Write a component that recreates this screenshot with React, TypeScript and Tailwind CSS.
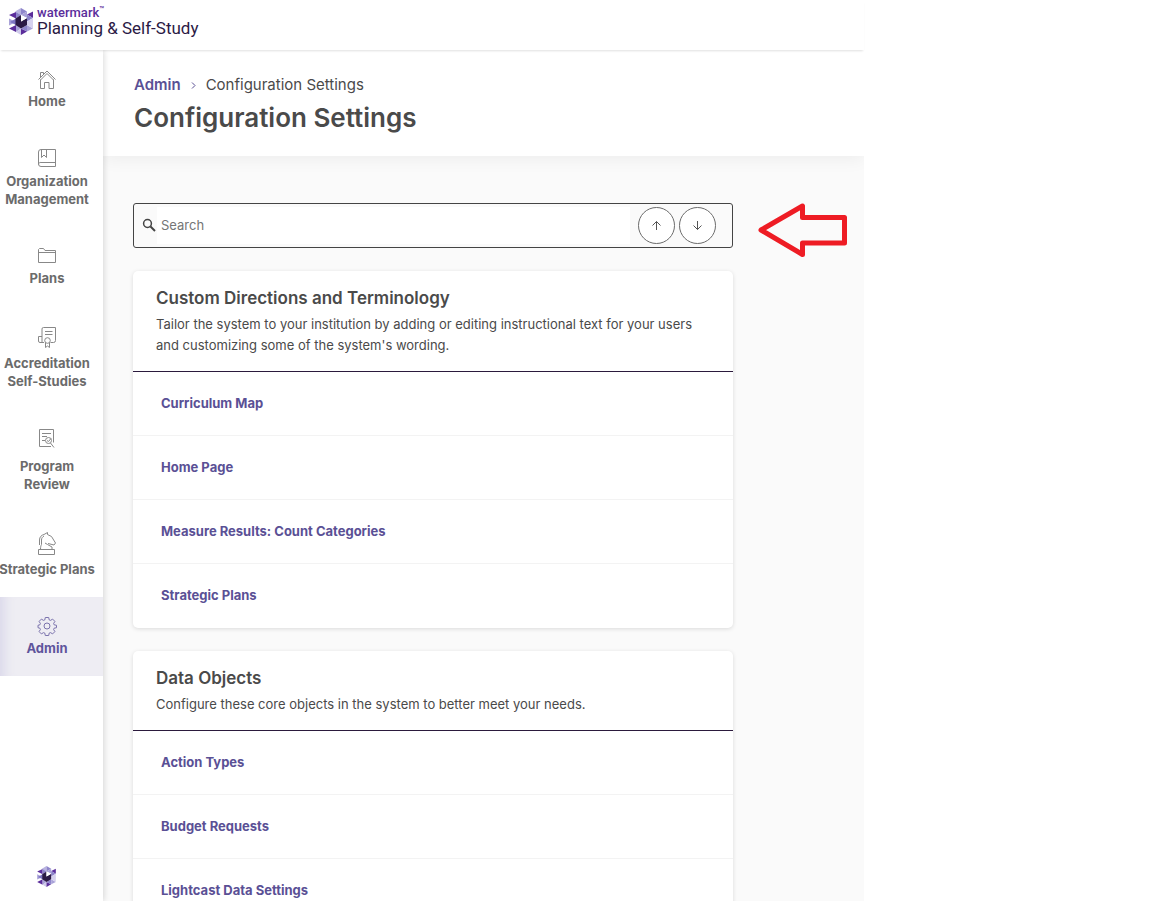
import type { ReactNode } from 'react'

type NavItem = {
  label: string[]
  icon: ReactNode
  active?: boolean
}

type Section = {
  title: string
  description: string
  links: string[]
}

function LogoMark({ className }: { className: string }) {
  return (
    <svg viewBox="0 0 24 27" className={className} aria-hidden="true">
      <path d="M12 0V7L6 3.5Z" fill="#b9b4e0" />
      <path d="M12 0 18 3.5 12 7Z" fill="#8f86cb" />
      <path d="M0 7 7 4V10.500Z" fill="#5b2d9b" />
      <path d="M7 4 12 7 7 10.500Z" fill="#8d84ca" />
      <path d="M24 3.500V10L18 6.500Z" fill="#5b2d9b" />
      <path d="M12 7 18 3.500V10Z" fill="#a9a2d8" />
      <path d="M18 6.500 24 10 18 13.500Z" fill="#8d84ca" />
      <path d="M0 10.500 7 14 0 17.500Z" fill="#a9a2d8" />
      <path d="M7 10.500V17L1 14Z" fill="#7d74c2" />
      <path d="M0 20.500 7 17V24Z" fill="#5b2d9b" />
      <path d="M7 17 12 20.500 7 24Z" fill="#a9a2d8" />
      <path d="M12 20.500V27L7 24Z" fill="#cfcaea" />
      <path d="M12 20.500 18 23.500 12 27Z" fill="#5b2d9b" />
      <path d="M12 20.500 18 17V23.500Z" fill="#8d84ca" />
      <path d="M18 17 24 20.500 18 23.500Z" fill="#a9a2d8" />
      <path d="M24 10V20.500L18 17V13.500Z" fill="#d6d1ee" />
      <path d="M6.500 10.500 12 7V13.500L18 10V17L12 20.500 6.500 17Z" fill="#2b1a45" />
      <path d="M12 7 18 10 12 13.500Z" fill="#fff" />
    </svg>
  )
}

function LineIcon({ children, height = 20 }: { children: ReactNode; height?: number }) {
  return (
    <svg
      width="20"
      height={height}
      viewBox={`0 0 20 ${height}`}
      fill="none"
      stroke="currentColor"
      strokeWidth="1"
      className="opacity-80"
      aria-hidden="true"
    >
      {children}
    </svg>
  )
}

const navItems: NavItem[] = [
  {
    label: ['Home'],
    icon: (
      <LineIcon height={19}>
        <path d="M1.5 9.5 10 1l8.500 8.500M3.500 9.500v9h4v-6h4.500v6h4.500v-9M3.500 7.500v-5h3v2M3.500 10 10 3.500l6.500 6.500" />
      </LineIcon>
    ),
  },
  {
    label: ['Organization', 'Management'],
    icon: (
      <LineIcon height={21}>
        <path d="M4 1.500h14.500v17H4A2.500 2.500 0 0 1 1.500 16V4A2.500 2.500 0 0 1 4 1.500ZM1.500 16.500A2 2 0 0 1 4 14.500h14.500M4.500 1.500v8l2.500-2.500 2.500 2.500v-8" />
      </LineIcon>
    ),
  },
  {
    label: ['Plans'],
    icon: (
      <LineIcon>
        <path d="M1.500 16.500v-13l1-1h4l1.500 2h10.500v12ZM1.500 6.500h17" />
      </LineIcon>
    ),
  },
  {
    label: ['Accreditation', 'Self-Studies'],
    icon: (
      <LineIcon height={26}>
        <path d="M13.500 17.500h3a2 2 0 0 0 2-2v-13H6.500q-1.500 0-1.500 1.500v13M7 17.500H3q-1.500 0-1.500-1.500v-4.500H5M8 6.500h7.500M8 9.500h7.500" />
        <circle cx="10.500" cy="15.500" r="2.800" />
        <path d="M8.500 17.500v5l2-1.500 2 1.500v-5" />
      </LineIcon>
    ),
  },
  {
    label: ['Program', 'Review'],
    icon: (
      <LineIcon height={26}>
        <path d="M14 18.500H2.500v-17h14v13M5 5.500h9M5 8.500h5M5 12.500h3" />
        <circle cx="11.500" cy="12.500" r="3" />
        <path d="m13.500 15 3.500 4.500M10 12.500l1.500 1 2.500-3" />
      </LineIcon>
    ),
  },
  {
    label: ['Strategic Plans'],
    icon: (
      <LineIcon height={26}>
        <path d="M1.500 18.500h16v5h-16ZM3.500 18.500c0-3 .500-4 1-5M2.500 14V9c0-3 2-5 4.500-5.500L10.500 1.500v2l4 2 4 6.500-1.500 2-6-1.500M8 12l2.500 1.500L15 16v2.500M4.500 13.500V9c0-2 1-3 2.500-4" />
      </LineIcon>
    ),
  },
  {
    label: ['Admin'],
    active: true,
    icon: (
      <LineIcon>
        <circle cx="10" cy="10" r="3" />
        <path d="M8.300 1.500h3.400l.500 2.400 1.300.500 2.100-1.300 2.300 2.300-1.300 2.100.500 1.300 2.400.500v2.400l-2.400.500-.500 1.300 1.300 2.100-2.300 2.300-2.100-1.300-1.300.500-.500 2.400H8.300l-.500-2.400-1.300-.500-2.100 1.300-2.300-2.300 1.300-2.100-.500-1.300-1.900-.500V9.300l1.900-.500.500-1.300-1.300-2.100 2.300-2.300 2.100 1.300 1.300-.500Z" />
      </LineIcon>
    ),
  },
]

const sections: Section[] = [
  {
    title: 'Custom Directions and Terminology',
    description:
      "Tailor the system to your institution by adding or editing instructional text for your users and customizing some of the system's wording.",
    links: ['Curriculum Map', 'Home Page', 'Measure Results: Count Categories', 'Strategic Plans'],
  },
  {
    title: 'Data Objects',
    description: 'Configure these core objects in the system to better meet your needs.',
    links: ['Action Types', 'Budget Requests', 'Lightcast Data Settings'],
  },
]

function TopBar() {
  return (
    <header className="relative z-20 flex h-[50px] shrink-0 items-start gap-1 bg-white pt-[5px] pl-[9px] shadow-[0_2px_2px_-1px_rgba(0,0,0,0.12)]">
      <LogoMark className="mt-[3px] h-[27px] w-6" />
      <div className="font-['Roboto',sans-serif] whitespace-nowrap">
        <p className="flex text-[13px] leading-[15px] font-medium text-[#5b2d9b]">
          watermark<span className="text-[8px] leading-[10px]">™</span>
        </p>
        <p className="text-[17px] leading-4 text-[#2b1a45]">Planning &amp; Self-Study</p>
      </div>
    </header>
  )
}

function Sidebar() {
  return (
    <nav
      aria-label="Main"
      className="relative z-10 flex w-[103px] shrink-0 flex-col bg-white pt-px text-[#6b6b6b] shadow-[1px_0_6px_rgba(0,0,0,0.15)]"
    >
      {navItems.map((item) => (
        <a
          key={item.label[0]}
          href="#"
          aria-current={item.active ? 'page' : undefined}
          className={
            item.active
              ? 'flex flex-col items-center gap-[3px] bg-[#eeedf3] py-[19px] pr-[9px] text-[#5f559c] shadow-[inset_14px_0_12px_-10px_#d9d7ea]'
              : 'flex flex-col items-center gap-[3px] py-[19px] pr-[9px]'
          }
        >
          {item.icon}
          <span className="text-center text-[13px] leading-[18px] font-bold whitespace-nowrap">
            {item.label.map((line) => (
              <span key={line} className="block">{line}</span>
            ))}
          </span>
        </a>
      ))}
      <div className="mt-auto flex justify-center pr-[11px] pb-[14px]">
        <LogoMark className="h-[21px] w-[19px]" />
      </div>
    </nav>
  )
}

function SearchBox() {
  const buttonClass =
    'flex size-[37px] items-center justify-center rounded-full border border-[#6b6b6b] bg-white text-[#555]'

  return (
    <div className="relative">
      <div className="flex h-[45px] items-center rounded-[3px] border border-[#444] pr-4">
        <label htmlFor="search" aria-label="Search" className="pl-2">
          <svg width="15" height="15" viewBox="0 0 15 15" fill="none" stroke="#444" strokeWidth="1.5" aria-hidden="true">
            <circle cx="5.500" cy="5.500" r="3.900" />
            <path d="m8.500 8.500 4.500 4.500" strokeWidth="2" />
          </svg>
        </label>
        <input
          id="search"
          type="text"
          placeholder="Search"
          className="h-[37px] min-w-0 flex-1 bg-white pb-px pl-1 text-[13px] text-[#444] outline-none placeholder:text-[#757575]"
        />
        <div className="flex gap-1 pl-2">
          <button type="button" aria-label="Previous result" className={buttonClass}>
            <svg width="11" height="11" viewBox="0 0 11 11" fill="none" stroke="currentColor" aria-hidden="true">
              <path d="M5.500 10V1.500M1.500 5.500l4-4 4 4" />
            </svg>
          </button>
          <button type="button" aria-label="Next result" className={buttonClass}>
            <svg width="11" height="11" viewBox="0 0 11 11" fill="none" stroke="currentColor" aria-hidden="true">
              <path d="M5.500 1v8.500M1.500 5.500l4 4 4-4" />
            </svg>
          </button>
        </div>
      </div>
      {/* callout arrow pointing at the search buttons */}
      <svg
        className="absolute top-0 left-full ml-6"
        width="92"
        height="56"
        viewBox="0 0 92 56"
        fill="none"
        stroke="#ee1c24"
        strokeWidth="5"
        strokeLinejoin="round"
        aria-hidden="true"
      >
        <path d="M4 27 45.500 3v11.500H87.500V40H45.500v11.500Z" />
      </svg>
    </div>
  )
}

function SectionCard({ title, description, links }: Section) {
  return (
    <section className="rounded-[5px] bg-white shadow-[0_1px_4px_rgba(0,0,0,0.13)]">
      <div className="border-b border-[#2b1a3d] px-[23px] py-[15px]">
        <h2 className="text-[17px] leading-6 font-semibold">{title}</h2>
        <p className="mt-1 text-[13px] leading-[21px]">{description}</p>
      </div>
      <ul className="divide-y divide-[#f3f3f3]">
        {links.map((link) => (
          <li key={link} className="flex h-16 items-center px-7">
            <a href="#" className="text-[13px] font-bold text-[#5a5095]">{link}</a>
          </li>
        ))}
      </ul>
    </section>
  )
}

export default function App() {
  return (
    <div className="h-screen overflow-hidden bg-white font-['Inter',sans-serif] text-[#4a4a4a] [font-optical-sizing:none]">
      <div className="flex h-full w-3/4 flex-col">
        <TopBar />
        <div className="flex min-h-0 flex-1">
          <Sidebar />
          <main className="min-w-0 flex-1 overflow-hidden bg-[#fafafa]">
            <div className="bg-white px-[31px] pt-[25px] pb-5 shadow-[0_4px_16px_rgba(0,0,0,0.05)]">
              <nav aria-label="Breadcrumb" className="flex items-center gap-2 text-[15px] leading-5">
                <a href="#" className="font-semibold text-[#5a5095]">Admin</a>
                <svg width="9" height="9" viewBox="0 0 9 9" fill="none" stroke="#5a5095" aria-hidden="true">
                  <path d="m3 1.500 3 3-3 3" />
                </svg>
                <span>Configuration Settings</span>
              </nav>
              <h1 className="mt-[5px] text-[26px] leading-9 font-semibold">Configuration Settings</h1>
            </div>
            <div className="px-[30px] pt-[47px]">
              <div className="flex max-w-[600px] flex-col gap-[23px]">
                <SearchBox />
                {sections.map((section) => (
                  <SectionCard key={section.title} {...section} />
                ))}
              </div>
            </div>
          </main>
        </div>
      </div>
    </div>
  )
}
